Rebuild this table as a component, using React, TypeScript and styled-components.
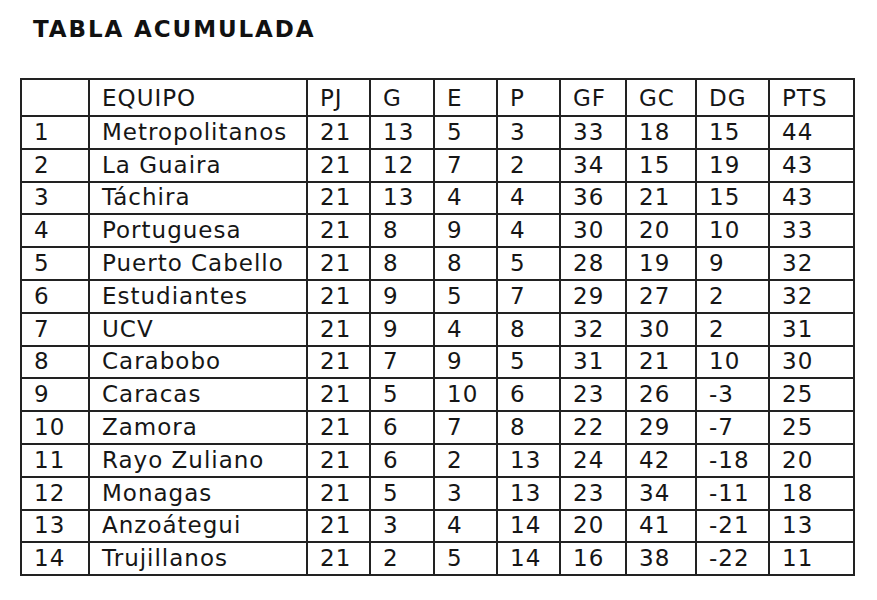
import React from 'react'
import styled, { createGlobalStyle } from 'styled-components'

const GlobalStyle = createGlobalStyle`
  html, body {
    margin: 0;
    padding: 0;
    background: #fff;
  }
  body {
    font-family: "DejaVu Sans", Verdana, sans-serif;
    color: #161616;
  }
`;

type Row = [string, number, number, number, number, number, number, number, number];

const rows: Row[] = [
  ['Metropolitanos', 21, 13, 5, 3, 33, 18, 15, 44],
  ['La Guaira', 21, 12, 7, 2, 34, 15, 19, 43],
  ['Táchira', 21, 13, 4, 4, 36, 21, 15, 43],
  ['Portuguesa', 21, 8, 9, 4, 30, 20, 10, 33],
  ['Puerto Cabello', 21, 8, 8, 5, 28, 19, 9, 32],
  ['Estudiantes', 21, 9, 5, 7, 29, 27, 2, 32],
  ['UCV', 21, 9, 4, 8, 32, 30, 2, 31],
  ['Carabobo', 21, 7, 9, 5, 31, 21, 10, 30],
  ['Caracas', 21, 5, 10, 6, 23, 26, -3, 25],
  ['Zamora', 21, 6, 7, 8, 22, 29, -7, 25],
  ['Rayo Zuliano', 21, 6, 2, 13, 24, 42, -18, 20],
  ['Monagas', 21, 5, 3, 13, 23, 34, -11, 18],
  ['Anzoátegui', 21, 3, 4, 14, 20, 41, -21, 13],
  ['Trujillanos', 21, 2, 5, 14, 16, 38, -22, 11],
];

const headers = ['', 'EQUIPO', 'PJ', 'G', 'E', 'P', 'GF', 'GC', 'DG', 'PTS'];
const widths = [68, 218, 63, 64, 63, 63, 66, 70, 73, 85];

const Page = styled.div`
  padding: 16px 0 0 20px;
`;

const Title = styled.h1`
  margin: 0 0 36px 13px;
  font-family: "DejaVu Sans", Verdana, sans-serif;
  font-weight: bold;
  font-size: 23px;
  letter-spacing: 1.9px;
  color: #111;
`;

const Table = styled.table`
  border-collapse: collapse;
  table-layout: fixed;
  width: 834px;
  border: 2px solid #222;
`;

const HeadRow = styled.tr`
  height: 37px;
`;

const BodyRow = styled.tr`
  height: 32.8px;
`;

const Cell = styled.td`
  border: 2px solid #222;
  padding: 0 0 0 12px;
  font-size: 23px;
  letter-spacing: 1px;
  line-height: 1;
  text-align: left;
  white-space: nowrap;
  overflow: hidden;
  vertical-align: middle;
`;

const HeadCell = styled(Cell).attrs({ as: 'th' })`
  font-weight: normal;
  padding-top: 1px;
`;

export default function App() {
  return (
    <Page>
      <GlobalStyle />
      <Title>TABLA ACUMULADA</Title>
      <Table>
        <colgroup>
          {widths.map((w, i) => (
            <col key={i} style={{ width: w }} />
          ))}
        </colgroup>
        <thead>
          <HeadRow>
            {headers.map((h, i) => (
              <HeadCell key={i}>{h}</HeadCell>
            ))}
          </HeadRow>
        </thead>
        <tbody>
          {rows.map((r, i) => (
            <BodyRow key={r[0]}>
              <Cell>{i + 1}</Cell>
              {r.map((v, j) => (
                <Cell key={j}>{v}</Cell>
              ))}
            </BodyRow>
          ))}
        </tbody>
      </Table>
    </Page>
  )
}
